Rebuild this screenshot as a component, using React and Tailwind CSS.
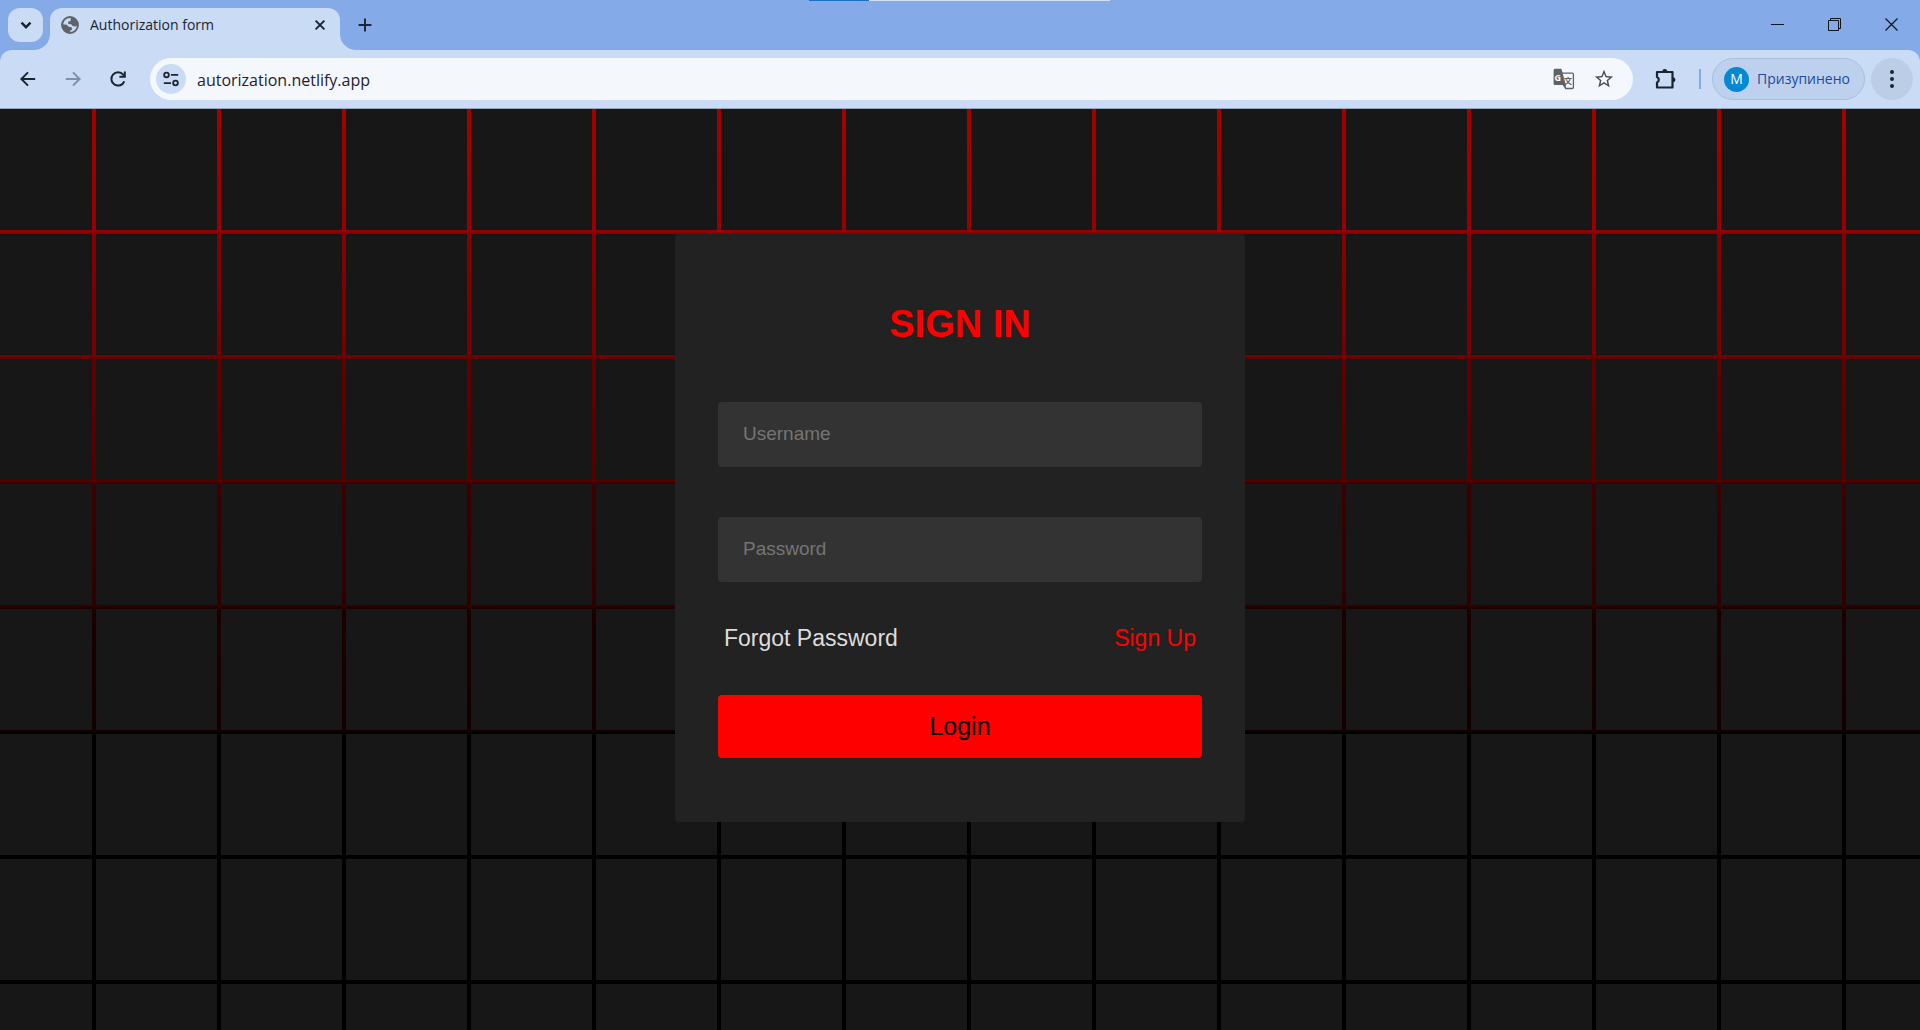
import { MdStarBorder } from "react-icons/md";

const iconButton =
  "flex size-[42px] shrink-0 items-center justify-center rounded-full text-[#1c2430]";

const Stroke = ({ size = 20, width = 2, children, className = "" }) => (
  <svg
    width={size}
    height={size}
    viewBox="0 0 20 20"
    fill="none"
    stroke="currentColor"
    strokeWidth={width}
    className={className}
    aria-hidden="true"
  >
    {children}
  </svg>
);

const GlobeIcon = () => (
  <svg
    width="18"
    height="18"
    viewBox="0 0 20 20"
    className="shrink-0 text-[#5f6368]"
    aria-hidden="true"
  >
    <circle
      cx="10"
      cy="10"
      r="8.8"
      fill="none"
      stroke="currentColor"
      strokeWidth="2.2"
    />
    <path
      d="M11 1.500C15 2 18.300 5 18.800 9.200L16.600 11.600 12.800 11.200 11.400 9.200 8.200 8.800 7.800 6.400 10.600 5.600z"
      fill="currentColor"
    />
    <path
      d="M1.500 9.200 6.400 9.600 8.600 12 11.800 12.600 12.400 15 10.400 16.200 10 18.600C5.500 18.600 1.800 15 1.500 9.200z"
      fill="currentColor"
    />
  </svg>
);

const TranslateIcon = () => (
  <svg width="22" height="22" viewBox="0 0 22 22" aria-hidden="true">
    <path
      d="M8 5.200h11.200a1.200 1.200 0 0 1 1.200 1.200v12.900a1.200 1.200 0 0 1-1.200 1.200h-6.600z"
      fill="#f4f8fd"
      stroke="#5f6368"
      strokeWidth="1.300"
    />
    <path
      d="M2 .8h6.400l4.500 16.300H2A1.400 1.400 0 0 1 .6 15.700V2.200A1.400 1.400 0 0 1 2 .8zM9.500 17.100h3.400l-.6 3.400z"
      fill="#5f6368"
    />
    <text x="1.500" y="12.500" fontSize="9" fontWeight="700" fill="#ffffff">
      G
    </text>
    <text
      x="11"
      y="16"
      fontSize="8"
      fontWeight="700"
      fill="#5f6368"
      fontFamily="Noto Sans CJK SC, sans-serif"
    >
      文
    </text>
  </svg>
);

const TabStrip = () => (
  <div className="relative flex h-[50px] items-start justify-between bg-[#84abe8]">
    <div className="absolute left-[809px] top-0 flex h-px w-[301px]">
      <div className="w-[60px] bg-[#1a6fc4]" />
      <div className="flex-1 bg-[#cfe0f6]" />
    </div>

    <div className="flex pl-2 pt-2">
      <button
        aria-label="Search tabs"
        className="flex h-[34px] w-[35px] items-center justify-center rounded-xl bg-[#c9dbf5] text-[#1c2430]"
      >
        <Stroke size={20} width={2.4}>
          <path d="M5.5 7.7 10 12.2l4.5-4.5" />
        </Stroke>
      </button>

      <div className="relative ml-[7px] flex h-[42px] w-[290px] items-center rounded-t-xl bg-[#c9dbf5] pb-2 pl-[11px] pr-3">
        <svg
          className="absolute -left-4 bottom-0 size-4 text-[#c9dbf5]"
          viewBox="0 0 16 16"
          fill="currentColor"
          aria-hidden="true"
        >
          <path d="M16 0v16H0A16 16 0 0 0 16 0z" />
        </svg>
        <svg
          className="absolute -right-4 bottom-0 size-4 text-[#c9dbf5]"
          viewBox="0 0 16 16"
          fill="currentColor"
          aria-hidden="true"
        >
          <path d="M0 0v16h16A16 16 0 0 1 0 0z" />
        </svg>
        <GlobeIcon />
        <span className="ml-[11px] flex-1 truncate text-sm text-[#1c2430]">
          Authorization form
        </span>
        <button aria-label="Close tab" className="text-[#1c2430]">
          <Stroke size={16} width={2.4}>
            <path d="m4.5 4.5 11 11m0-11-11 11" />
          </Stroke>
        </button>
      </div>

      <button
        aria-label="New tab"
        className="ml-[15px] flex h-[34px] w-5 items-center justify-center text-[#1c2430]"
      >
        <Stroke size={16} width={2.4}>
          <path d="M10 2v16M2 10h16" />
        </Stroke>
      </button>
    </div>

    <div className="flex h-[49px] text-[#10151d]">
      <button
        aria-label="Minimize"
        className="flex w-[57px] items-center justify-center"
      >
        <svg width="13" height="13" viewBox="0 0 13 13" aria-hidden="true">
          <path d="M0 6.5h13" stroke="currentColor" />
        </svg>
      </button>
      <button
        aria-label="Restore"
        className="flex w-[57px] items-center justify-center"
      >
        <svg
          width="13"
          height="13"
          viewBox="0 0 13 13"
          fill="none"
          stroke="currentColor"
          aria-hidden="true"
        >
          <path d="M.5 2.5h10v10H.5zM2.5 2.5v-2h10v10h-2" />
        </svg>
      </button>
      <button
        aria-label="Close"
        className="flex w-[57px] items-center justify-center"
      >
        <svg width="13" height="13" viewBox="0 0 13 13" aria-hidden="true">
          <path
            d="m.5.5 12 12m0-12-12 12"
            stroke="currentColor"
            strokeWidth="1.2"
          />
        </svg>
      </button>
    </div>
  </div>
);

const Toolbar = () => (
  <div className="bg-[#84abe8]">
    <div className="flex h-[59px] items-center rounded-t-xl border-b border-[#98a5bb] bg-[#c9dbf5] px-[7px]">
      <button aria-label="Back" className={iconButton}>
        <Stroke>
          <path d="M17.2 10H4M10 3.4 3.4 10l6.6 6.6" />
        </Stroke>
      </button>
      <button
        aria-label="Forward"
        disabled
        className="ml-[3px] flex size-[42px] shrink-0 items-center justify-center text-[#8190a8]"
      >
        <Stroke>
          <path d="M2.8 10H16M10 3.4l6.6 6.6-6.6 6.6" />
        </Stroke>
      </button>
      <div className="ml-[3px] flex">
        <button aria-label="Reload" className={iconButton}>
          <Stroke>
            <path d="M16.3 12.3A6.7 6.7 0 1 1 15.2 5.6L16.6 7.2" />
            <path d="M16.8 2.4v5.4h-5.4" />
          </Stroke>
        </button>
      </div>

      <div className="ml-[11px] flex h-[42px] flex-1 items-center rounded-full bg-[#f4f8fd] pl-[6px] pr-[18px]">
        <button
          aria-label="View site information"
          className="flex size-[30px] shrink-0 items-center justify-center rounded-full bg-[#c9dbf5] text-[#1c2430]"
        >
          <Stroke size={18}>
            <circle cx="5" cy="5.5" r="2.6" />
            <path d="M10 5.5h8M2 14.5h8" />
            <circle cx="15" cy="14.5" r="2.6" />
          </Stroke>
        </button>
        <input
          aria-label="Address"
          defaultValue="autorization.netlify.app"
          className="ml-[11px] min-w-0 flex-1 bg-transparent pt-0.5 text-base text-[#1f2329] outline-none"
        />
        <button aria-label="Translate this page">
          <TranslateIcon />
        </button>
        <button aria-label="Bookmark" className="ml-[18px] text-[#4b5055]">
          <MdStarBorder size={22} />
        </button>
      </div>

      <div className="ml-3 flex">
        <button aria-label="Extensions" className={iconButton}>
          <svg
            width="22"
            height="22"
            viewBox="0 0 22 22"
            fill="none"
            aria-hidden="true"
          >
            <path
              d="M2 4h15.500v15.500H2v-5a3 3 0 0 0 0-5.500z"
              stroke="currentColor"
              strokeWidth="2.200"
              strokeLinejoin="round"
            />
            <path
              d="M7.300 3.500a2.500 2.500 0 0 1 5 0zM18 9.200a2.500 2.500 0 0 1 0 5z"
              fill="currentColor"
            />
          </svg>
        </button>
      </div>
      <div className="ml-3 h-5 w-0.5 shrink-0 bg-[#84abe8]" />
      <button className="ml-[11px] flex h-[42px] shrink-0 items-center rounded-full border border-[#a8bfe2] bg-[#bdd1ef] pl-[11px] pr-[14px] text-sm text-[#1d4a9c]">
        <span className="mr-2 flex size-[25px] items-center justify-center rounded-full bg-[#0488d1] text-sm text-white">
          M
        </span>
        Призупинено
      </button>
      <button
        aria-label="Menu"
        className="ml-[6px] flex size-[42px] shrink-0 items-center justify-center rounded-full bg-[#bccde8] text-[#1c2430]"
      >
        <svg
          width="20"
          height="20"
          viewBox="0 0 20 20"
          fill="currentColor"
          aria-hidden="true"
        >
          <circle cx="10" cy="3" r="2" />
          <circle cx="10" cy="10" r="2" />
          <circle cx="10" cy="17" r="2" />
        </svg>
      </button>
    </div>
  </div>
);

const Field = ({ id, label, type = "text" }) => (
  <input
    id={id}
    name={id}
    type={type}
    placeholder={label}
    aria-label={label}
    className="h-[65px] w-full rounded bg-[#333333] px-[25px] pb-0.5 text-[19px] text-white outline-none placeholder:text-[#757575]"
  />
);

const SignInCard = () => (
  <form
    onSubmit={(e) => e.preventDefault()}
    className="w-[570px] max-w-full rounded bg-[#222222] px-[43px] pb-16 pt-[68px]"
  >
    <h1 className="text-center text-[38px] font-bold leading-[44px] text-[#ff0000]">
      SIGN IN
    </h1>
    <div className="mt-14 flex flex-col gap-[50px]">
      <Field id="username" label="Username" />
      <Field id="password" label="Password" type="password" />
    </div>
    <div className="mt-11 flex justify-between px-[6px] text-[23px] leading-6">
      <a href="#forgot" className="text-[#dddddd]">
        Forgot Password
      </a>
      <a href="#signup" className="text-[#ff0000]">
        Sign Up
      </a>
    </div>
    <button
      type="submit"
      className="mt-[45px] h-[63px] w-full rounded bg-[#ff0000] text-[25px] text-black"
    >
      Login
    </button>
  </form>
);

const App = () => (
  <div className="flex min-h-screen flex-col">
    <header className="font-['Open_Sans','Noto_Sans',sans-serif]">
      <TabStrip />
      <Toolbar />
    </header>
    {/* stepped red fade shows through the 4px gaps between the dark tiles */}
    <main className="flex flex-1 bg-[linear-gradient(#a30000_0px,#960000_123px,#860000_123px,#740000_248px,#620000_248px,#520000_373px,#3e0000_373px,#2e0000_498px,#1c0000_498px,#120000_623px,#000000_623px)] font-['Liberation_Sans',Arial,sans-serif]">
      <div className="flex flex-1 items-start justify-center bg-[conic-gradient(from_90deg_at_4px_4px,#171717_90deg,transparent_0deg)] bg-size-[125px_125px] bg-position-[92px_121px] pt-[125px]">
        <SignInCard />
      </div>
    </main>
  </div>
);

export default App;
